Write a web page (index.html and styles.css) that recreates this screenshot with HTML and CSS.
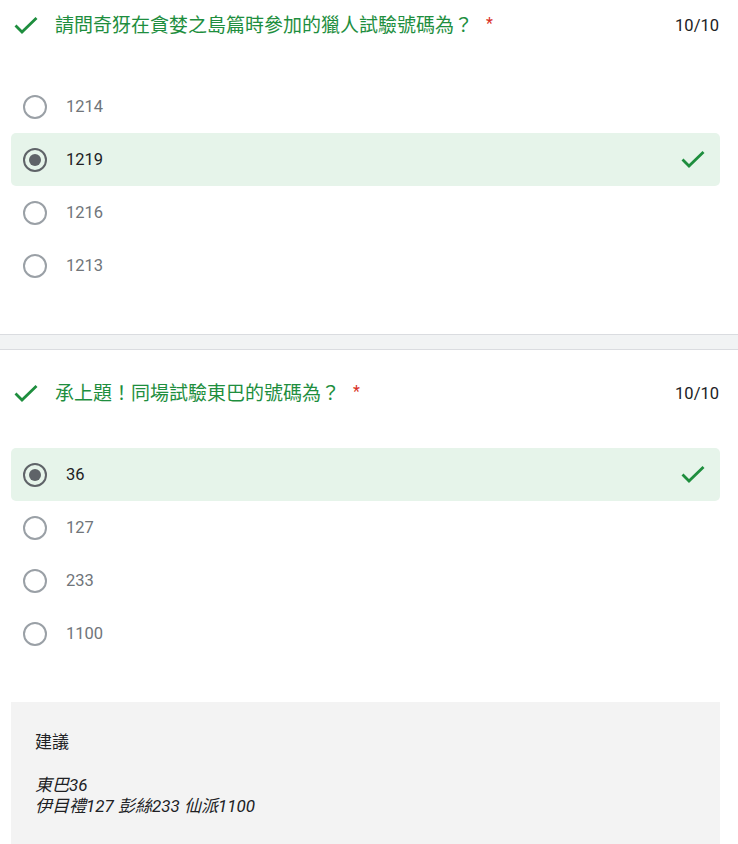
FILE: index.html
```html
<!DOCTYPE html>
<html lang="zh-Hant">
<head>
<meta charset="utf-8">
<link rel="stylesheet" href="styles.css">
</head>
<body>
<section class="card first">
  <div class="q-head">
    <svg class="q-check" width="24" height="17" viewBox="0 0 24 17"><polyline points="1.5,8.5 8,15 22.5,1" fill="none" stroke="#1e8e3e" stroke-width="2.8"/></svg>
    <div class="q-title">請問奇犽在貪婪之島篇時參加的獵人試驗號碼為？<span class="req">*</span></div>
    <div class="q-score">10/10</div>
  </div>
  <div class="options">
    <div class="opt"><span class="radio"></span><span class="opt-text">1214</span></div>
    <div class="opt selected"><span class="radio on"></span><span class="opt-text">1219</span>
      <svg class="opt-check" width="24" height="17" viewBox="0 0 24 17"><polyline points="1.5,8.5 8,15 22.5,1" fill="none" stroke="#1e8e3e" stroke-width="2.8"/></svg></div>
    <div class="opt"><span class="radio"></span><span class="opt-text">1216</span></div>
    <div class="opt"><span class="radio"></span><span class="opt-text">1213</span></div>
  </div>
</section>
<div class="band"></div>
<section class="card second">
  <div class="q-head">
    <svg class="q-check" width="24" height="17" viewBox="0 0 24 17"><polyline points="1.5,8.5 8,15 22.5,1" fill="none" stroke="#1e8e3e" stroke-width="2.8"/></svg>
    <div class="q-title">承上題！同場試驗東巴的號碼為？<span class="req">*</span></div>
    <div class="q-score">10/10</div>
  </div>
  <div class="options">
    <div class="opt selected"><span class="radio on"></span><span class="opt-text">36</span>
      <svg class="opt-check" width="24" height="17" viewBox="0 0 24 17"><polyline points="1.5,8.5 8,15 22.5,1" fill="none" stroke="#1e8e3e" stroke-width="2.8"/></svg></div>
    <div class="opt"><span class="radio"></span><span class="opt-text">127</span></div>
    <div class="opt"><span class="radio"></span><span class="opt-text">233</span></div>
    <div class="opt"><span class="radio"></span><span class="opt-text">1100</span></div>
  </div>
  <div class="feedback">
    <div class="fb-title">建議</div>
    <div class="fb-body">東巴36<br>伊目禮127 彭絲233 仙派1100</div>
  </div>
</section>
</body>
</html>
```

FILE: styles.css
```css
html, body {
  margin: 0;
  padding: 0;
  background: #ffffff;
}
body {
  font-family: Roboto, "Noto Sans CJK TC", sans-serif;
  color: #202124;
  width: 738px;
  overflow: hidden;
}
.card {
  padding: 0 18px 0 11px;
}
.card.first {
  padding-bottom: 42px;
}
.card.second {
  padding-top: 18px;
}
.q-head {
  display: flex;
  align-items: center;
  height: 50px;
}
.q-check {
  flex: none;
  margin-left: 3px;
  margin-right: 17px;
  margin-top: 1px;
}
.q-title {
  flex: 1;
  font-size: 19px;
  color: #1e8e3e;
  line-height: 26px;
}
.req {
  color: #d93025;
  font-size: 16px;
  margin-left: 13px;
  vertical-align: 3px;
}
.q-score {
  flex: none;
  font-size: 16.5px;
  color: #202124;
  margin-right: 1px;
}
.options {
  margin-top: 30px;
  display: flex;
  flex-direction: column;
}
.opt {
  display: flex;
  align-items: center;
  height: 53px;
  padding: 0 15px 0 12px;
  border-radius: 5px;
}
.opt.selected {
  background: #e6f4ea;
}
.radio {
  flex: none;
  box-sizing: border-box;
  width: 24px;
  height: 24px;
  border: 2px solid #9aa0a6;
  border-radius: 50%;
  display: flex;
  align-items: center;
  justify-content: center;
}
.radio.on {
  border-color: #5f6368;
}
.radio.on::after {
  content: "";
  width: 12px;
  height: 12px;
  border-radius: 50%;
  background: #5f6368;
}
.opt-text {
  flex: 1;
  margin-left: 19px;
  font-size: 16.5px;
  color: #70757a;
}
.opt.selected .opt-text {
  color: #202124;
}
.opt-check {
  flex: none;
}
.band {
  height: 14px;
  background: #f1f3f4;
  border-top: 1px solid #dadce0;
  border-bottom: 1px solid #dadce0;
}
.feedback {
  margin-top: 42px;
  background: #f3f3f3;
  padding: 30px 24px 40px 24px;
  width: 709px;
  box-sizing: border-box;
  font-size: 17px;
  line-height: 21px;
}
.fb-title {
  margin-bottom: 22px;
}
.fb-body {
  font-style: italic;
}
```
